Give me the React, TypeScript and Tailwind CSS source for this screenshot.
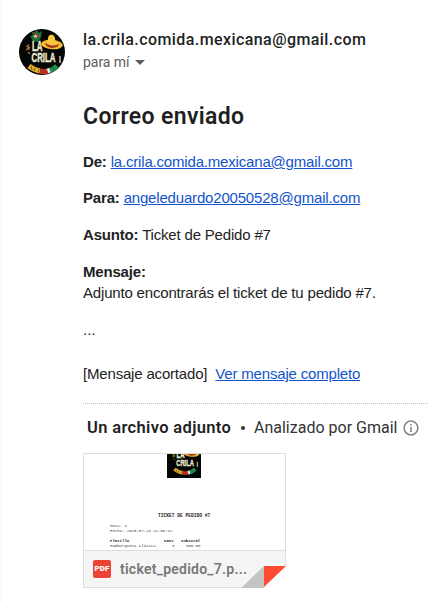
import React from "react";

function LogoArt() {
  return (
    <g>
      <rect width="46" height="52" fill="#040605" />
      <path d="M12 2l4 3 1-5 3 4 3-2-1 6-3 5-5-1-3-5 3-1z" fill="#18733b" />
      <path d="M15 3l3 4M21 6l-6 3" stroke="#d84132" strokeWidth="1.2" />
      <path d="M14 7l3-1 1 3z" fill="#e8e4d2" />
      <ellipse cx="33" cy="15.5" rx="10.8" ry="4.8" fill="#f3bd32" transform="rotate(4 33 15.5)" />
      <path d="M27 14c3-2 1-7 4-8 3-1 4 0 5 3 0 3 1 4 4 6-4 3-9 3-13-1z" fill="#f7c83b" />
      <path d="M26 13.5c4 3 9 4 14 1.5l-1 2.5c-4 2-9 2-12-1z" fill="#a83b1c" />
      <path d="M7 17l4 2M9 15l1 6M7 21l4-3M9 23l2 2" stroke="#ad7923" strokeWidth="1.2" />
      <text x="13" y="22" fill="#eee9cf" stroke="#eee9cf" strokeWidth=".5" fontFamily="Liberation Sans, sans-serif" fontWeight="700" fontSize="14.5" textLength="10.5" lengthAdjust="spacingAndGlyphs">LA</text>
      <text x="12.5" y="33" fill="#eee9cf" stroke="#eee9cf" strokeWidth=".5" fontFamily="Liberation Sans, sans-serif" fontWeight="700" fontSize="13" textLength="24" lengthAdjust="spacingAndGlyphs">CRILA</text>
      <path d="M41 27v7" stroke="#dedbd0" strokeWidth="1.3" />
      <path d="M10 37 Q15 41 21 42" stroke="#e2ae29" strokeWidth="5" fill="none" />
      <path d="M21 42 Q25 43 29 42" stroke="#c92f2a" strokeWidth="5" fill="none" />
      <path d="M28.5 42l3-1" stroke="#eee" strokeWidth="5" />
      <path d="M31 41.5 Q35 40 38 37" stroke="#169452" strokeWidth="5" fill="none" />
      <path d="M12 37l1 4M16 39l-1 3M20 40l-1 3M25 41v3M34 38l1 3" stroke="#5b461b" strokeWidth=".8" />
    </g>
  );
}

function Avatar() {
  return (
    <svg viewBox="0 0 46 46" className="mt-[29px] ml-[19px] h-[46px] w-[46px] shrink-0 rounded-full">
      <LogoArt />
    </svg>
  );
}

function Header() {
  return (
    <header className="flex h-[85px]">
      <Avatar />
      <div className="ml-[18px] pt-[28px]">
        <div className="h-[23px] font-['Roboto',sans-serif] text-[16px] leading-[23px] font-medium tracking-[0.42px] whitespace-nowrap text-[#1f1f1f]">la.crila.comida.mexicana@gmail.com</div>
        <div className="flex h-[22px] items-center font-['Roboto',sans-serif] text-[14px] leading-[22px] text-[#5e5e5e]">
          <span className="tracking-[-0.05px]">para mí</span>
          <svg viewBox="0 0 10 5" className="ml-[6px] h-[5px] w-[10px]"><path d="M0 0h10L5 5z" fill="#5e5e5e" /></svg>
        </div>
      </div>
    </header>
  );
}

function Message() {
  return (
    <main className="ml-[83px] font-['Liberation_Sans',Arial,sans-serif] text-[15px] leading-[21px] tracking-[-0.18px] whitespace-nowrap text-[#222]">
      <h1 className="mt-[17px] h-[30px] font-['Roboto',sans-serif] text-[23px] leading-[30px] font-semibold tracking-[0.35px] text-[#1f1f1f]">Correo enviado</h1>
      <p className="mt-[19px] h-[21px]"><b>De:</b> <a className="text-[#15c] underline">la.crila.comida.mexicana@gmail.com</a></p>
      <p className="mt-[15px] h-[21px]"><b>Para:</b> <a className="text-[#15c] underline">angeleduardo20050528@gmail.com</a></p>
      <p className="mt-[16px] h-[21px]"><b>Asunto:</b> <span>Ticket de Pedido #7</span></p>
      <p className="mt-[16px] h-[21px]"><b>Mensaje:</b></p>
      <p className="h-[21px]">Adjunto encontrarás el ticket de tu pedido #7.</p>
      <p className="mt-[16px] h-[21px] tracking-normal">...</p>
      <p className="mt-[23px] h-[21px]">[Mensaje acortado]<a className="ml-[8px] text-[#15c] underline">Ver mensaje completo</a></p>
    </main>
  );
}

function Attachment() {
  return (
    <section className="mr-[2px] ml-[83px]">
      <svg className="mt-[19px] block h-px w-full"><path d="M0 .5H347" stroke="#bdbdbd" strokeDasharray="1 1" /></svg>
      <div className="mt-[13px] ml-[4px] flex h-[22px] items-center font-['Roboto',sans-serif] text-[16px] leading-[22px] whitespace-nowrap text-[#1f1f1f]">
        <span className="w-[145px] text-[16.5px] font-semibold tracking-[0.35px]">Un archivo adjunto</span>
        <span className="ml-[9px] h-[4px] w-[4px] rounded-full bg-[#333]" />
        <span className="ml-[9px] w-[143px] text-[#333]">Analizado por Gmail</span>
        <svg viewBox="0 0 16 16" className="ml-[6px] h-[16px] w-[16px]">
          <circle cx="8" cy="8" r="6.9" fill="none" stroke="#858585" strokeWidth="1.5" />
          <path d="M8 7v5M8 4v1.6" stroke="#858585" strokeWidth="1.6" />
        </svg>
      </div>
      <div className="relative mt-[14px] h-[135px] w-[203px] border border-[#dedede] bg-white">
        <div className="flex h-[96px] flex-col overflow-hidden font-['Liberation_Mono',monospace] text-[4px] leading-[5px] text-[#444]">
          <svg viewBox="0 16.5 46 32.5" className="ml-[83px] h-[24px] w-[34px] shrink-0"><LogoArt /></svg>
          <div className="mt-[35px] pl-[74px] text-[4.6px] leading-[6px] font-bold text-[#222]">TICKET DE PEDIDO #7</div>
          <div className="mt-[4px] ml-[26px] leading-[6px]">Mesa: 4</div>
          <div className="ml-[26px] leading-[5px]">Fecha: 2025-07-28 21:08:47</div>
          <div className="mt-[5px] ml-[26px] flex shrink-0 leading-[5px] font-bold text-[#222]"><span className="w-[54px]">Platillo</span><span className="w-[17px]">Cant</span><span>Subtotal</span></div>
          <div className="ml-[26px] flex shrink-0 leading-[5px]"><span className="w-[62px]">Hamburguesa Clásica</span><span className="w-[14px]">3</span><span>360.00</span></div>
        </div>
        <div className="flex h-[37px] items-center border-t border-[#dedede] bg-[#f5f5f5]">
          <span className="ml-[9px] flex h-[18px] w-[18px] items-center justify-center rounded-[2px] bg-[#ea4335] font-['Roboto',sans-serif] text-[8px] font-black text-white">PDF</span>
          <span className="ml-[9px] font-['Roboto',sans-serif] text-[14px] font-semibold tracking-[0.25px] text-[#777]">ticket_pedido_7.p...</span>
        </div>
        <svg viewBox="0 0 45 23" className="absolute -right-px -bottom-px h-[23px] w-[45px]">
          <path d="M23 1h22v22H23z" fill="#fff" />
          <path d="M0 23L23 1v22z" fill="#c4c4c4" />
          <path d="M23 1h22L23 22z" fill="#ff4b32" />
        </svg>
      </div>
    </section>
  );
}

export default function App() {
  return (
    <div className="h-[603px] w-[430px] overflow-hidden border-l-2 border-[#f8f9fe] bg-white">
      <div className="-ml-[2px]">
        <Header />
        <Message />
        <Attachment />
      </div>
    </div>
  );
}
